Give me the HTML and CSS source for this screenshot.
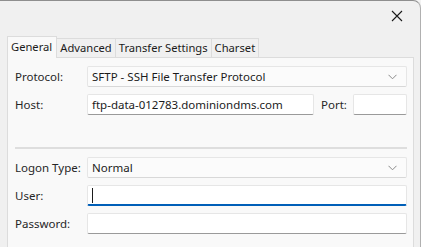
FILE: index.html
```html
<!DOCTYPE html>
<html>
<head>
<meta charset="utf-8">
<link rel="stylesheet" href="styles.css">
</head>
<body>
<div class="window">
  <div class="titlebar">
    <button class="close" aria-label="Close">
      <svg width="12" height="12" viewBox="0 0 12 12"><path d="M1 1 L11 11 M11 1 L1 11" stroke="#1a1a1a" stroke-width="1.1" fill="none"/></svg>
    </button>
  </div>
  <div class="tabs">
    <div class="tab active">General</div>
    <div class="tab">Advanced</div>
    <div class="tab">Transfer Settings</div>
    <div class="tab">Charset</div>
  </div>
  <div class="panel">
    <div class="row">
      <label class="lbl">Protocol:</label>
      <div class="select"><span>SFTP - SSH File Transfer Protocol</span>
        <svg class="chev" width="9" height="6" viewBox="0 0 9 6"><path d="M0.5 0.8 L4.5 4.8 L8.5 0.8" stroke="#8a8a8a" stroke-width="1" fill="none"/></svg>
      </div>
    </div>
    <div class="row">
      <label class="lbl">Host:</label>
      <div class="hostline">
        <div class="input host"><span>ftp-data-012783.dominiondms.com</span></div>
        <label class="portlbl">Port:</label>
        <div class="input port"></div>
      </div>
    </div>
    <div class="sep"></div>
    <div class="row">
      <label class="lbl">Logon Type:</label>
      <div class="select"><span>Normal</span>
        <svg class="chev" width="9" height="6" viewBox="0 0 9 6"><path d="M0.5 0.8 L4.5 4.8 L8.5 0.8" stroke="#8a8a8a" stroke-width="1" fill="none"/></svg>
      </div>
    </div>
    <div class="row">
      <label class="lbl">User:</label>
      <div class="input focused"><span class="caret"></span></div>
    </div>
    <div class="row">
      <label class="lbl">Password:</label>
      <div class="input"></div>
    </div>
  </div>
</div>
</body>
</html>
```
FILE: styles.css
```css
* { box-sizing: border-box; }
html, body { margin: 0; padding: 0; }
body {
  width: 421px;
  height: 247px;
  overflow: hidden;
  background: #f3f3f3;
  font-family: "Noto Sans", "Segoe UI", sans-serif;
  font-size: 11.5px;
  color: #1b1b1b;
}
.window {
  height: 247px;
  background: #f0f0f0;
  border-top: 1px solid #8e8e8e;
  border-right: 1px solid #b0b0b0;
  border-top-right-radius: 8px;
  display: flex;
  flex-direction: column;
}
.titlebar {
  height: 35px;
  display: flex;
  justify-content: flex-end;
  align-items: flex-start;
}
.close {
  width: 46px;
  height: 30px;
  border: 0;
  background: transparent;
  padding: 0;
  display: flex;
  align-items: center;
  justify-content: center;
}
.tabs {
  display: flex;
  align-items: flex-end;
  padding-left: 7px;
  height: 21px;
  position: relative;
  z-index: 1;
  font-size: 11.2px;
}
.tab {
  height: 19px;
  padding: 0 3px;
  line-height: 18px;
  border: 1px solid #dcdcdc;
  border-bottom: 0;
  border-left: 0;
  background: #f0f0f0;
  color: #1b1b1b;
}
.tab.active {
  height: 22px;
  margin-bottom: -1px;
  padding: 0 4px 0 3px;
  line-height: 20px;
  background: #f9f9f9;
  border-left: 1px solid #dcdcdc;
}
.panel {
  flex: 1;
  margin: 0 6px 0 7px;
  background: #f9f9f9;
  border: 1px solid #dcdcdc;
  border-bottom: 0;
  padding: 8px 6px 0 7px;
  display: flex;
  flex-direction: column;
  gap: 7px;
}
.row {
  display: grid;
  grid-template-columns: 72px 1fr;
  align-items: center;
  height: 21px;
}
.lbl { color: #262626; }
.select, .input {
  height: 21px;
  background: #fff;
  border: 1px solid #e6e6e6;
  border-bottom-color: #9a9a9a;
  border-radius: 2px;
  display: flex;
  align-items: center;
  padding: 0 4px;
}
.select {
  background: #fbfbfb;
  border-bottom-color: #d8d8d8;
  justify-content: space-between;
  padding-right: 9px;
}
.hostline {
  display: flex;
  align-items: center;
}
.host { width: 227px; }
.portlbl { margin-left: 7px; width: 32px; color: #262626; }
.port { flex: 1; }
.sep {
  height: 2px;
  background: #dedede;
  margin: 25px 0 1px;
}
.focused {
  border-bottom: 2px solid #005fb8;
}
.caret {
  display: block;
  width: 1px;
  height: 15px;
  background: #1b1b1b;
}
```
